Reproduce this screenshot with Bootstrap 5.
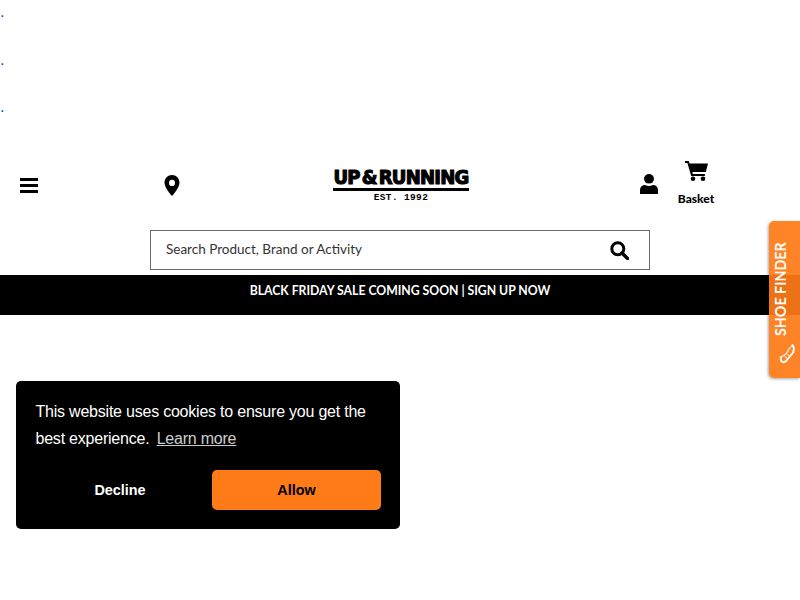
<!DOCTYPE html>
<html lang="en">
<head>
<meta charset="utf-8">
<title>Up & Running</title>
<link href="https://cdn.jsdelivr.net/npm/bootstrap@5.3.0/dist/css/bootstrap.min.css" rel="stylesheet">
<style>
html,body{height:600px;overflow:hidden}
body{font-family:"Lato",sans-serif;color:#000;background:#fff;position:relative}
.dot-stack{height:150px;display:flex;flex-direction:column}
.dot-link{display:block;height:47.5px;font-size:16px;line-height:24px;color:#0056b3;text-decoration:none;font-family:"Liberation Sans",sans-serif}
.head-row{height:80px;padding-bottom:9px}
.cell-burger{width:150px;padding-left:20px}
.cell-pin{width:145px;padding-left:14px}
.cell-logo{width:345px}
.cell-user{width:160px;height:35px}
.logo-wrap{width:136px;margin-left:38px;text-align:center;line-height:1}
.logo-main{font-family:"DejaVu Sans",sans-serif;font-weight:700;font-size:18px;letter-spacing:-.75px;-webkit-text-stroke:1.1px #000;line-height:19px;white-space:nowrap;display:block;transform:scaleY(1.06);transform-origin:50% 85%}
.logo-amp{margin:0 2px}
.logo-rule{height:3px;background:#000;margin-top:1px}
.logo-est{font-family:"Liberation Mono",monospace;font-weight:700;font-size:9.5px;letter-spacing:.35px;line-height:13px;display:block}
.user-ico{margin-top:6px}
.basket-box{width:38px;margin-left:19px;margin-top:-7px}
.basket-ico{margin-bottom:11px}
.basket-text{font-size:12px;font-weight:900;line-height:14px;white-space:nowrap}
.search-box{width:500px;height:40px;border:1px solid #6c6c6c;padding:0 20px 0 15px;margin:0 auto 5px;font-size:13.5px;color:#333}
.search-txt{padding-bottom:2px}
.promo{background:#000;color:#fff;height:40px;font-size:12.25px;letter-spacing:-.02px;font-weight:700;text-align:center;padding-top:8px;line-height:16px}
.side-tab{position:absolute;right:0;top:221px;width:31px;height:157px;background:rgba(255,123,23,.93);border-radius:5px 0 0 5px;box-shadow:-1px 1px 3px rgba(0,0,0,.35);color:#fff}
.side-label{position:absolute;left:3px;top:21px;writing-mode:vertical-rl;transform:rotate(180deg);font-size:14.3px;font-weight:700;line-height:18px;height:94px;text-align:left;white-space:nowrap}
.side-icon{position:absolute;left:10px;top:122px}
.cookie-pop{position:absolute;left:16px;top:381px;width:384px;height:148px;background:#000;color:#fff;border-radius:5px;padding:17px 19px 19px 19.5px;font-family:"Liberation Sans",sans-serif;font-size:16px;letter-spacing:-.22px;line-height:27px}
.cookie-pop a{color:#fff;opacity:.8;margin-left:3px}
.cookie-actions{margin-top:18px;letter-spacing:0}
.btn-decline,.btn-allow{width:169px;height:40px;font-size:14.4px;font-weight:700;border:0;border-radius:5px;padding:0;line-height:40px;font-family:"Liberation Sans",sans-serif}
.btn-decline{background:transparent;color:#fff;margin-right:7.5px}
.btn-allow{background:#ff7b17;color:#000}
</style>
</head>
<body>
<div class="dot-stack">
  <a class="dot-link" href="#">.</a>
  <a class="dot-link" href="#">.</a>
  <a class="dot-link" href="#">.</a>
</div>
<header class="head-row d-flex align-items-center">
  <div class="cell-burger">
    <svg width="18" height="15" viewBox="0 0 18 15" class="d-block"><path d="M0 0h18v3H0zM0 6h18v3H0zM0 12h18v3H0z" fill="#000"/></svg>
  </div>
  <div class="cell-pin">
    <svg width="16" height="21" viewBox="0 0 16 20" preserveAspectRatio="none" class="d-block"><path fill-rule="evenodd" d="M8 0c4.200 0 7.500 3.200 7.500 7.300 0 3.800-4.600 9.800-7.500 12.700C5.100 17.100.5 11.100.5 7.300.5 3.200 3.800 0 8 0zm0 4.500a3 3 0 1 0 0 6 3 3 0 0 0 0-6z" fill="#000"/></svg>
  </div>
  <div class="cell-logo">
    <div class="logo-wrap">
      <span class="logo-main">UP<span class="logo-amp">&amp;</span>RUNNING</span>
      <div class="logo-rule"></div>
      <span class="logo-est">EST. 1992</span>
    </div>
  </div>
  <div class="cell-user d-flex align-items-start">
    <svg width="18" height="20" viewBox="0 0 18 21" preserveAspectRatio="none" class="d-block user-ico"><circle cx="9" cy="5" r="5" fill="#000"/><path d="M0 21v-4c0-3.500 2.500-5.500 5-5.500 1.200.7 2.500 1 4 1s2.800-.3 4-1c2.500 0 5 2 5 5.500v4z" fill="#000"/></svg>
    <div class="text-center basket-box">
      <svg width="23" height="20" viewBox="0 0 23 20" class="d-block mx-auto basket-ico"><path d="M0 0h3.800l.7 2.500H23l-2.200 8.500H7.400l.4 2h12.100v2H6.200L2.400 2H0z" fill="#000"/><circle cx="8" cy="17.700" r="2.300" fill="#000"/><circle cx="18" cy="17.700" r="2.300" fill="#000"/></svg>
      <div class="basket-text">Basket</div>
    </div>
  </div>
</header>
<div class="search-box d-flex align-items-center justify-content-between">
  <span class="search-txt">Search Product, Brand or Activity</span>
  <svg width="19" height="19" viewBox="0 0 19 19"><circle cx="7.800" cy="7.800" r="6" fill="none" stroke="#000" stroke-width="3"/><path d="M12 12l5.500 5.500" stroke="#000" stroke-width="3.400" stroke-linecap="round"/></svg>
</div>
<div class="promo">BLACK FRIDAY SALE COMING SOON | SIGN UP NOW</div>

<aside class="side-tab">
  <span class="side-label">SHOE FINDER</span>
  <svg class="side-icon" width="18" height="22" viewBox="0 0 18 22"><path d="M2 14l5-3 3-5 3.500-4" fill="none" stroke="#fff" stroke-width="1.100" stroke-linecap="round" stroke-linejoin="round"/><path d="M13.500 2c2.200 3 1.800 6-.5 9l-6 7c-1.800 1.800-3.800 1.500-5-.5-.5-1.200-.3-2.500 0-3.500" fill="none" stroke="#fff" stroke-width="1.900" stroke-linecap="round" stroke-linejoin="round"/><path d="M5.500 13l3 2.500M7.500 10.500l3 2.500" stroke="#fff" stroke-width=".9"/></svg>
</aside>

<div class="cookie-pop">
  <div>This website uses cookies to ensure you get the best experience. <a href="#">Learn more</a></div>
  <div class="cookie-actions d-flex">
    <button class="btn btn-decline" type="button">Decline</button>
    <button class="btn btn-allow" type="button">Allow</button>
  </div>
</div>
<script src="https://cdn.jsdelivr.net/npm/bootstrap@5.3.0/dist/js/bootstrap.bundle.min.js"></script>
</body>
</html>
